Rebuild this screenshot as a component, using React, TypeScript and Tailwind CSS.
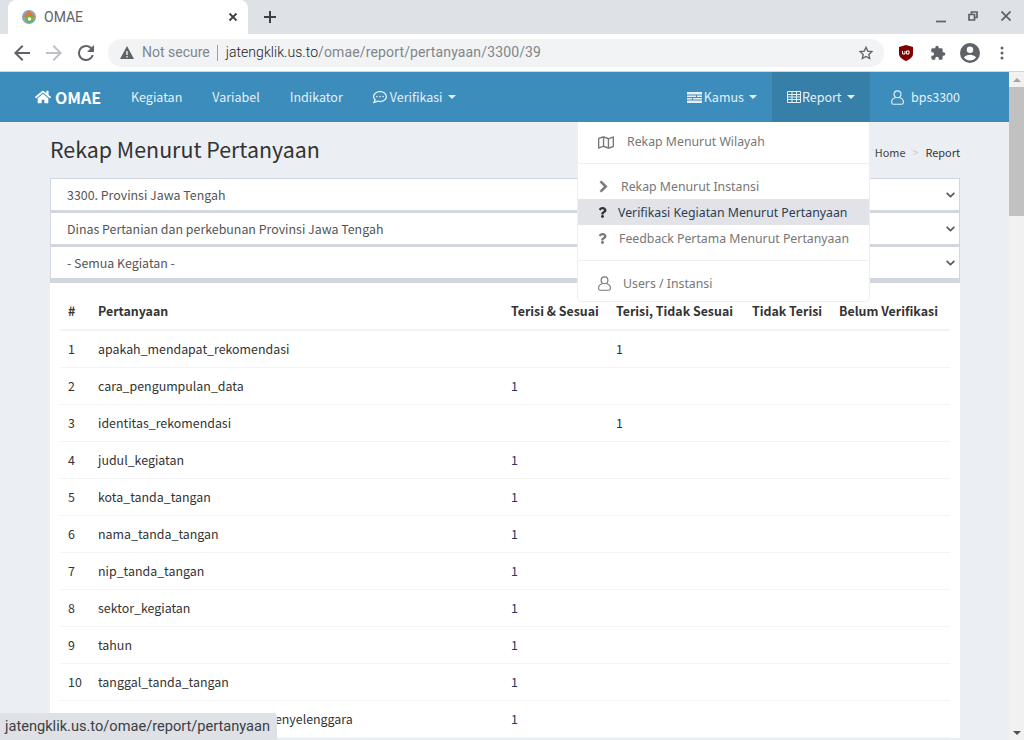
import React from 'react';
import { FaHome, FaRegCommentDots, FaRegMap, FaChevronRight, FaQuestion, FaChevronDown } from 'react-icons/fa';

const rows: [number, string, string, string][] = [
  [1, 'apakah_mendapat_rekomendasi', '', '1'],
  [2, 'cara_pengumpulan_data', '1', ''],
  [3, 'identitas_rekomendasi', '', '1'],
  [4, 'judul_kegiatan', '1', ''],
  [5, 'kota_tanda_tangan', '1', ''],
  [6, 'nama_tanda_tangan', '1', ''],
  [7, 'nip_tanda_tangan', '1', ''],
  [8, 'sektor_kegiatan', '1', ''],
  [9, 'tahun', '1', ''],
  [10, 'tanggal_tanda_tangan', '1', ''],
  [11, 'unit_kerja_dan_pemerintah_penyelenggara', '1', ''],
];

const selects = ['3300. Provinsi Jawa Tengah', 'Dinas Pertanian dan perkebunan Provinsi Jawa Tengah', '- Semua Kegiatan -'];

function Caret() {
  return <span className="ml-[5px] inline-block w-0 h-0 border-x-[4px] border-x-transparent border-t-[4px] border-t-current" />;
}

function UserIcon({ className }: { className?: string }) {
  return (
    <svg className={className} viewBox="0 0 14 16" fill="none" stroke="currentColor" strokeWidth="1.2">
      <circle cx="7" cy="4.600" r="3.700" />
      <path d="M4.500 8.300C2.300 9 .7 10.300.7 12.500v.8c0 1.300.8 2 2 2h8.600c1.200 0 2-.7 2-2v-.8c0-2.200-1.600-3.500-3.800-4.200" />
    </svg>
  );
}

function ChromeBar() {
  return (
    <div className="shrink-0 font-['Roboto',sans-serif]">
      <div className="h-[34px] bg-[#dee1e6] flex items-end relative">
        <div className="ml-[8px] w-[240px] h-[34px] mt-auto bg-white rounded-t-[8px] flex items-center pl-[13px] pr-[10px]">
          <svg width="16" height="16" viewBox="0 0 16 16">
            <circle cx="8" cy="8" r="7" fill="#7fa8d0" />
            <path d="M1.500 8L8 1.500 14.500 8z" fill="#e8762d" />
            <circle cx="8.500" cy="10" r="3.800" fill="#6db33f" />
            <circle cx="8.500" cy="10" r="1.800" fill="#fff" />
          </svg>
          <span className="ml-[7px] text-[14px] text-[#5f6368]">OMAE</span>
          <svg className="ml-auto" width="10" height="10" viewBox="0 0 10 10" stroke="#3c4043" strokeWidth="1.800">
            <path d="M1.500 1.500l7 7M8.500 1.500l-7 7" />
          </svg>
        </div>
        <svg className="ml-[15px] mb-[10px]" width="14" height="14" viewBox="0 0 14 14" stroke="#3c4043" strokeWidth="2">
          <path d="M7 1v12M1 7h12" />
        </svg>
        <div className="ml-auto flex items-center h-[34px] pb-[2px]">
          <svg className="mr-[22px] mt-[4px]" width="10" height="10" viewBox="0 0 10 10" stroke="#5f6368" strokeWidth="1.700"><path d="M0 8.500h10" /></svg>
          <svg className="mr-[23px]" width="10" height="10" viewBox="0 0 10 10" fill="none" stroke="#5f6368" strokeWidth="1.700"><path d="M1 3.500h5.500V9H1zM3.500 3V1H9v5.500H7" /></svg>
          <svg className="mr-[13px]" width="10" height="10" viewBox="0 0 10 10" stroke="#5f6368" strokeWidth="1.800"><path d="M.5.5l9 9M9.500.5l-9 9" /></svg>
        </div>
      </div>
      <div className="h-[38px] bg-white border-b border-[#d4d7da] flex items-center">
        <svg className="ml-[14px]" width="16" height="16" viewBox="0 0 16 16" fill="#5f6368"><path d="M16 7H3.800l5.600-5.600L8 0 0 8l8 8 1.400-1.400L3.800 9H16z" /></svg>
        <svg className="ml-[16px]" width="16" height="16" viewBox="0 0 16 16" fill="#bdc1c6"><path d="M0 7h12.200L6.600 1.400 8 0l8 8-8 8-1.400-1.400L12.200 9H0z" /></svg>
        <svg className="ml-[15px]" width="18" height="18" viewBox="3 3 18 18" fill="#5f6368"><path d="M17.650 6.350A7.960 7.960 0 0 0 12 4a8 8 0 1 0 7.730 10h-2.080A6 6 0 1 1 12 6c1.660 0 3.140.69 4.220 1.780L13 11h7V4l-2.350 2.350z" /></svg>
        <div className="ml-[13px] w-[776px] h-[28px] rounded-full bg-[#f1f3f4] flex items-center pl-[12px] pr-[10px] text-[14px]">
          <svg width="14" height="13" viewBox="0 0 14 13" fill="#5f6368"><path d="M7 0l7 13H0zM6.300 5v4h1.400V5zm0 5v1.400h1.400V10z" fillRule="evenodd" /></svg>
          <span className="ml-[8px] text-[#80868b]">Not secure</span>
          <span className="ml-[7px] mr-[8px] w-px h-[16px] bg-[#9aa0a6]" />
          <span className="text-[#202124] font-light tracking-[0.04px]">jatengklik.us.to</span>
          <span className="text-[#80868b] tracking-[0.14px]">/omae/report/pertanyaan/3300/39</span>
          <svg className="ml-auto" width="16" height="16" viewBox="0 0 24 24" fill="none" stroke="#5f6368" strokeWidth="2"><path d="M12 3.500l2.600 5.700 6.200.7-4.600 4.200 1.300 6.100L12 17.100l-5.500 3.100 1.300-6.100-4.600-4.200 6.200-.7z" /></svg>
        </div>
        <svg className="ml-[15px]" width="14" height="16" viewBox="0 0 14 16"><path d="M7 0l7 2v7c0 3-3.500 5.500-7 7-3.500-1.500-7-4-7-7V2z" fill="#800000" /><path d="M3.500 6v3h2.500V6M7.500 9V6h2.500v3H7.500" stroke="#fff" strokeWidth="1" fill="none" /></svg>
        <svg className="ml-[17px]" width="16" height="16" viewBox="0 0 24 24" fill="#5f6368"><path d="M20.500 11H19V7a2 2 0 0 0-2-2h-4V3.500a2.500 2.500 0 0 0-5 0V5H4a2 2 0 0 0-2 2v3.800h1.500a2.700 2.700 0 0 1 0 5.400H2V20a2 2 0 0 0 2 2h3.800v-1.500a2.700 2.700 0 0 1 5.400 0V22H17a2 2 0 0 0 2-2v-4h1.500a2.500 2.500 0 0 0 0-5z" /></svg>
        <svg className="ml-[14px]" width="20" height="20" viewBox="0 0 20 20" fill="#5f6368"><path fillRule="evenodd" d="M10 0a10 10 0 1 0 0 20 10 10 0 0 0 0-20zm0 3.500a3.200 3.200 0 1 1 0 6.400 3.200 3.200 0 0 1 0-6.400zM10 17.500a7.500 7.500 0 0 1-6-3c1-1.800 3.800-2.800 6-2.800s5 1 6 2.800a7.500 7.500 0 0 1-6 3z" /></svg>
        <svg className="ml-[20px]" width="4" height="14" viewBox="0 0 4 14" fill="#5f6368"><circle cx="2" cy="2" r="1.500" /><circle cx="2" cy="7" r="1.500" /><circle cx="2" cy="12" r="1.500" /></svg>
      </div>
    </div>
  );
}

function NavBar() {
  const item = 'flex items-center h-full px-[15px] text-[12.5px] leading-[16px] text-[#e6eff6] whitespace-nowrap';
  return (
    <div className="h-[50px] shrink-0 bg-[#3c8dbc] flex items-center pl-[20px] pr-[49px] text-white">
      <div className="flex items-center px-[15px] h-full font-bold text-[16px]">
        <FaHome className="w-[16px] h-[16px] mr-[4px] shrink-0" />
        OMAE
      </div>
      <div className={item}>Kegiatan</div>
      <div className={item}>Variabel</div>
      <div className={item}>Indikator</div>
      <div className={item}>
        <FaRegCommentDots className="w-[14px] h-[14px] mr-[3px] shrink-0" />
        Verifikasi
        <Caret />
      </div>
      <div className="ml-auto flex items-center h-full">
        <div className={item}>
          {/* kamus icon, stacked notched bars */}
          <svg className="w-[15px] h-[11px] mr-[2px] shrink-0" viewBox="0 0 15 11" fill="currentColor">
            <path d="M0 0h15v2.500H0zM0 3.500h9V5H0zM10 3.500h5V5h-5zM0 6h5v1.500H0zM6 6h9v1.500H6zM0 8.500h15V11H0z" />
          </svg>
          Kamus
          <Caret />
        </div>
        <div className={`${item} bg-[#367fa9] w-[98px]`}>
          <svg className="w-[14px] h-[12px] mr-[1px] shrink-0" viewBox="0 0 14 12" fill="none" stroke="currentColor" strokeWidth="1">
            <path d="M.5.5h13v11H.5zM.5 3.500h13M.5 6h13M.5 8.500h13M5 .5v11M9.500.5v11" />
          </svg>
          Report
          <Caret />
        </div>
        <div className={`${item} pl-[21px] pr-0`}>
          <UserIcon className="w-[13px] h-[15px] mr-[7px] shrink-0" />
          bps3300
        </div>
      </div>
    </div>
  );
}

function DropItem({ icon, label, active, gap }: { icon: React.ReactNode; label: string; active?: boolean; gap: string }) {
  return (
    <div className={`h-[26px] flex items-center pl-[20px] text-[12.3px] whitespace-nowrap ${active ? 'bg-[#e1e3e9] text-[#2f3d4f]' : 'text-[#777777]'}`}>
      <span className={`w-[16px] flex shrink-0 ${active ? 'text-[#333333]' : 'text-[#777777]'}`}>{icon}</span>
      <span className={`${gap} pt-[2px]`}>{label}</span>
    </div>
  );
}

function Dropdown() {
  return (
    <div className="absolute left-[577px] top-[122px] w-[293px] h-[180px] bg-white rounded-b-[5px] border border-t-0 border-[#eeeeee] z-10 flex flex-col">
      <div className="h-[41px] flex items-center pl-[20px] text-[12.3px] text-[#777777]">
        <FaRegMap className="w-[16px] h-[15px] shrink-0" />
        <span className="ml-[13px]">Rekap Menurut Wilayah</span>
      </div>
      <div className="h-px bg-[#eeeeee]" />
      <div className="h-[9px]" />
      <DropItem icon={<FaChevronRight className="w-[11px] h-[13px] stroke-current stroke-[30]" />} label="Rekap Menurut Instansi" gap="ml-[7px]" />
      <DropItem icon={<FaQuestion className="w-[9px] h-[11px]" />} label="Verifikasi Kegiatan Menurut Pertanyaan" active gap="ml-[4px]" />
      <DropItem icon={<FaQuestion className="w-[9px] h-[11px]" />} label="Feedback Pertama Menurut Pertanyaan" gap="ml-[5px]" />
      <div className="h-[9px]" />
      <div className="h-px bg-[#eeeeee]" />
      <div className="flex-1 flex items-center pt-[5px] pl-[20px] text-[12.3px] text-[#777777]">
        <UserIcon className="w-[13px] h-[15px] shrink-0" />
        <span className="ml-[12px] pt-[2px]">Users / Instansi</span>
      </div>
    </div>
  );
}

export default function App() {
  return (
    <div className="w-[1024px] h-[740px] overflow-hidden relative flex flex-col bg-[#ebeff4]">
      <ChromeBar />
      <div className="flex flex-1 min-h-0 font-['Noto_Sans_CJK_SC',sans-serif]">
        <div className="flex-1 min-w-0 flex flex-col">
          <NavBar />
          <div className="flex-1 min-h-0 overflow-hidden pl-[50px] pr-[49px] bg-[#ebeff4]">
            <div className="h-[56px] flex items-center justify-between pb-[3px]">
              <h1 className="text-[21.4px] font-normal leading-[30px] text-[#333333]">Rekap Menurut Pertanyaan</h1>
              <div className="flex items-center text-[10.9px] leading-[16px] mt-[6px] text-[#333333]">
                <span className="text-[#444444]">Home</span>
                <span className="mx-[7px] text-[#cccccc]">&gt;</span>
                <span>Report</span>
              </div>
            </div>
            <div className="flex flex-col">
              {selects.map((s) => (
                <div key={s} className="h-[34px] bg-white border-[1px] border-b-[2px] border-[#d2d6de] flex items-center justify-between pl-[16px] pr-[3px] pt-[1px] text-[12.4px] text-[#555555]">
                  <span>{s}</span>
                  <FaChevronDown className="w-[11px] h-[10px] text-[#555555]" />
                </div>
              ))}
            </div>
            <div className="bg-white border-t-[3px] border-[#d2d6de] px-[10px] pt-[10px]">
              <table className="w-[890px] table-fixed border-collapse text-[12.4px] text-[#333333]">
                <colgroup>
                  <col className="w-[30px]" />
                  <col className="w-[413px]" />
                  <col className="w-[105px]" />
                  <col className="w-[136px]" />
                  <col className="w-[87px]" />
                  <col className="w-[119px]" />
                </colgroup>
                <thead>
                  <tr className="h-[37px] border-b-[2px] border-[#f4f4f4] text-left">
                    <th className="px-[8px] font-bold">#</th>
                    <th className="px-[8px] font-bold">Pertanyaan</th>
                    <th className="px-[8px] font-bold whitespace-nowrap">Terisi &amp; Sesuai</th>
                    <th className="px-[8px] font-bold whitespace-nowrap">Terisi, Tidak Sesuai</th>
                    <th className="px-[8px] font-bold whitespace-nowrap">Tidak Terisi</th>
                    <th className="px-[8px] font-bold whitespace-nowrap">Belum Verifikasi</th>
                  </tr>
                </thead>
                <tbody>
                  {rows.map(([n, name, ok, bad]) => (
                    <tr key={n} className="h-[37px] border-b border-[#f4f4f4]">
                      <td className="px-[8px] pt-[2px]">{n}</td>
                      <td className="px-[8px] pt-[2px] whitespace-nowrap">{name}</td>
                      <td className="px-[8px] pt-[2px] text-[#1f3a6e]">{ok}</td>
                      <td className="px-[8px] pt-[2px]">{bad}</td>
                      <td />
                      <td />
                    </tr>
                  ))}
                </tbody>
              </table>
            </div>
          </div>
        </div>
        {/* scrollbar */}
        <div className="w-[15px] shrink-0 bg-[#f1f1f1] flex flex-col items-center">
          <div className="h-[15px] flex items-center">
            <span className="w-0 h-0 border-x-[4px] border-x-transparent border-b-[4px] border-b-[#a3a3a3]" />
          </div>
          <div className="w-full h-[129px] bg-[#c1c1c1]" />
          <div className="mt-auto h-[15px] flex items-center">
            <span className="w-0 h-0 border-x-[4px] border-x-transparent border-t-[4px] border-t-[#505050]" />
          </div>
        </div>
      </div>
      <Dropdown />
      <div className="absolute left-0 bottom-0 h-[27px] w-[277px] bg-[#dee1e6] rounded-tr-[4px] flex items-center pl-[5px] font-['Roboto',sans-serif] text-[14.6px] text-[#3c4043] whitespace-nowrap">
        jatengklik.us.to/omae/report/pertanyaan
      </div>
    </div>
  );
}
